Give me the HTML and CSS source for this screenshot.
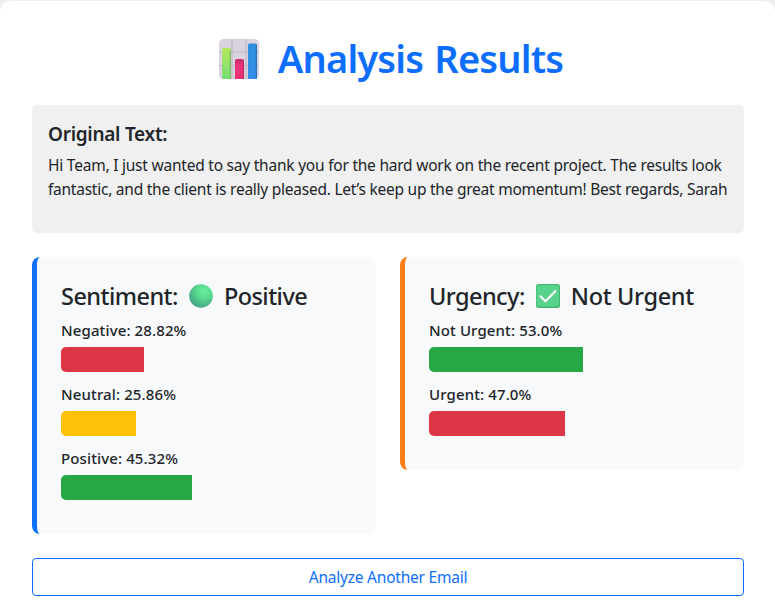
FILE: index.html
```
<!DOCTYPE html>
<html lang="en">
<head>
<meta charset="utf-8">
<title>Analysis Results</title>
<link rel="stylesheet" href="styles.css">
</head>
<body>
<main class="container">
  <h1 class="title">
    <svg class="title-icon" viewBox="0 0 42 42" aria-hidden="true">
      <defs>
        <linearGradient id="lime" x1="0" y1="0" x2="0" y2="1"><stop offset="0" stop-color="#b4e85c"/><stop offset="1" stop-color="#72dd78"/></linearGradient>
        <linearGradient id="pink" x1="0" y1="0" x2="0" y2="1"><stop offset="0" stop-color="#c32b62"/><stop offset=".3" stop-color="#e9357b"/><stop offset="1" stop-color="#f02f72"/></linearGradient>
        <linearGradient id="blue" x1="0" y1="0" x2="0" y2="1"><stop offset="0" stop-color="#2d91dd"/><stop offset="1" stop-color="#348ee9"/></linearGradient>
        <clipPath id="tile"><rect x="1" y="1" width="40" height="40" rx="4.5"/></clipPath>
      </defs>
      <g clip-path="url(#tile)">
        <rect x="1" y="1" width="40" height="40" fill="#d9d3df"/>
        <path d="M14 1v40M28 1v40M1 14h40M1 27.5h40" stroke="#bbb4c1" stroke-width="1"/>
        <rect x="4" y="10" width="9" height="33" rx="2" fill="url(#lime)"/>
        <path d="M12.3 12v30" stroke="#82ba63" stroke-width="1.2"/>
        <rect x="17" y="21" width="9" height="22" rx="2" fill="url(#pink)"/>
        <path d="M25.3 23v20" stroke="#b82661" stroke-width="1"/>
        <rect x="30" y="5.5" width="9" height="38" rx="2" fill="url(#blue)"/>
        <path d="M38.3 7v36" stroke="#266eb4" stroke-width="1.2"/>
      </g>
    </svg>
    <span class="title-text">Analysis Results</span>
  </h1>

  <section class="original">
    <h2 class="original-heading">Original Text:</h2>
    <p class="original-body"><span class="line-first">Hi Team, I just wanted to say thank you for the hard work on the recent project. The results look</span> <span class="line-second">fantastic, and the client is really pleased. Let’s keep up the great momentum! Best regards, Sarah</span></p>
  </section>

  <div class="cards">
    <section class="card card-sentiment">
      <h3 class="card-title">
        <span>Sentiment:</span>
        <svg class="card-icon" viewBox="0 0 24 24" aria-hidden="true">
          <defs><radialGradient id="ball" cx=".63" cy=".3" r=".7"><stop offset="0" stop-color="#67ef9e"/><stop offset=".45" stop-color="#58d98e"/><stop offset="1" stop-color="#46a685"/></radialGradient></defs>
          <circle cx="12" cy="12" r="11.8" fill="url(#ball)"/>
        </svg>
        <span>Positive</span>
      </h3>
      <p class="label">Negative: 28.82%</p>
      <div class="bar bar-red" style="width: 83px"></div>
      <p class="label">Neutral: 25.86%</p>
      <div class="bar bar-yellow" style="width: 75px"></div>
      <p class="label">Positive: 45.32%</p>
      <div class="bar bar-green" style="width: 131px"></div>
    </section>
    <section class="card card-urgency">
      <h3 class="card-title">
        <span>Urgency:</span>
        <svg class="card-icon" viewBox="0 0 24 24" aria-hidden="true">
          <rect x="0" y="0" width="24" height="24" rx="2.5" fill="#45b575"/>
          <rect x="0.6" y="1" width="22.4" height="21.6" rx="2" fill="#58d38c"/>
          <path d="M4.5 12.3l5 5L19.3 7.2" fill="none" stroke="#fff" stroke-width="2.1" stroke-linecap="round" stroke-linejoin="round"/>
        </svg>
        <span class="value-urgency">Not Urgent</span>
      </h3>
      <p class="label">Not Urgent: 53.0%</p>
      <div class="bar bar-green" style="width: 154px"></div>
      <p class="label">Urgent: 47.0%</p>
      <div class="bar bar-red" style="width: 136px"></div>
    </section>
  </div>

  <a class="button">Analyze Another Email</a>
</main>
</body>
</html>
```
FILE: styles.css
```
* { box-sizing: border-box; }
body {
  margin: 0;
  padding-top: 1px;
  background: #ededee;
  color: #212529;
  font: 16px/24px "Noto Sans", sans-serif;
}
h1, h2, h3, p { margin: 0; }
.container {
  height: 608px;
  padding: 32px 31px 12px 32px;
  background: #fff;
  border-radius: 10px 10px 0 0;
}
.title {
  display: flex;
  justify-content: center;
  align-items: center;
  height: 48px;
  margin-bottom: 24px;
  padding: 3px 0 0 5px;
  color: #0d6efd;
  font-size: 38px;
  font-weight: 600;
  line-height: 48px;
  letter-spacing: -0.8px;
  word-spacing: 2px;
  white-space: nowrap;
}
.title-icon { flex: none; width: 42px; height: 42px; margin-right: 18px; }
.title-text { padding-bottom: 2px; }
.original {
  height: 128px;
  margin-bottom: 24px;
  padding: 17px 16px 16px;
  background: #f0f0f0;
  border-radius: 5px;
}
.original-heading { margin-bottom: 7px; font-size: 19px; font-weight: 600; line-height: 24px; letter-spacing: -0.28px; }
.original-body { font-size: 15.5px; white-space: nowrap; }
.line-first, .line-second { display: block; }
.line-first { letter-spacing: -0.225px; }
.line-second { letter-spacing: -0.245px; }
.cards { display: grid; grid-template-columns: 1fr 1fr; gap: 24px; align-items: start; margin-bottom: 24px; }
.card { padding: 24px; background: #f8f9fa; border-left: 5px solid; border-radius: 8px; }
.card-sentiment { height: 277px; border-color: #0d6efd; }
.card-urgency { height: 213px; border-color: #fd7e14; }
.card-title { display: flex; align-items: center; height: 29px; margin-bottom: 8px; font-size: 23.5px; font-weight: 500; line-height: 29px; letter-spacing: -0.55px; white-space: nowrap; }
.card-title span { padding-top: 2px; }
.value-urgency { letter-spacing: -0.35px; }
.card-icon { flex: none; width: 24px; height: 24px; margin: 0 11px 0 11px; }
.label { font-size: 15px; font-weight: 500; letter-spacing: 0.12px; }
.bar { height: 25px; margin: 5px 0 10px; border-radius: 5px 0 0 5px; }
.bar-red { background: #dc3545; }
.bar-yellow { background: #ffc107; }
.bar-green { background: #28a745; }
.button {
  display: flex;
  justify-content: center;
  align-items: center;
  height: 38px;
  border: 1px solid #0d6efd;
  border-radius: 4px;
  color: #0d6efd;
  font-size: 15.5px;
  letter-spacing: -0.22px;
}
```
